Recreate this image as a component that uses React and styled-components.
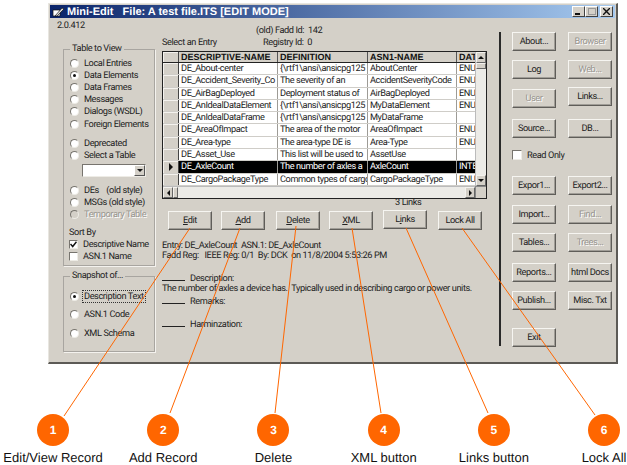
import React from 'react';
import styled, { createGlobalStyle } from 'styled-components';

const GlobalStyle = createGlobalStyle`
  html, body {
    margin: 0;
    padding: 0;
    background: #fff;
  }
  body {
    font-family: Roboto, "Liberation Sans", Arial, sans-serif;
    font-size: 9.2px;
    letter-spacing: -0.4px;
    text-rendering: geometricPrecision;
    color: #222;
  }
`;

const ORANGE = '#ff6600';

const Page = styled.div`
  position: relative;
  width: 627px;
  height: 465px;
  overflow: hidden;
  padding: 3px 9px 0 48px;
  box-sizing: border-box;
`;

const Window = styled.div`
  width: 570px;
  height: 361px;
  box-sizing: border-box;
  background: #d4d0c8;
  border-top: 1px solid #e8e6e0;
  border-left: 1px solid #e8e6e0;
  border-right: 2px solid #5c5a56;
  border-bottom: 2px solid #5c5a56;
  padding: 1px;
  display: flex;
  flex-direction: column;
`;

const TitleBar = styled.div`
  height: 13px;
  flex: none;
  display: flex;
  align-items: center;
  padding: 0 2px 0 2px;
  background: linear-gradient(90deg, #0a246a, #a6caf0);
  color: #fff;
  font-family: "Liberation Sans", Arial, sans-serif;
  font-weight: bold;
  font-size: 11px;
  letter-spacing: 0;
`;

const TitleText = styled.span`
  margin-left: 2px;
  white-space: pre;
`;

const WinButtons = styled.div`
  margin-left: auto;
  display: flex;
`;

const WinButton = styled.div`
  width: 13px;
  height: 11px;
  margin-left: ${({ $gap }) => $gap || 0}px;
  box-sizing: border-box;
  background: #d4d0c8;
  border: 1px solid;
  border-color: #fff #404040 #404040 #fff;
  display: grid;
  place-content: center;
`;

const Body = styled.div`
  flex: 1;
  display: flex;
  min-height: 0;
`;

const LeftColumn = styled.div`
  width: 112px;
  flex: none;
  padding-left: 7px;
  box-sizing: border-box;
`;

const Version = styled.div`
  height: 25px;
  padding-top: 1px;
  box-sizing: border-box;
  line-height: 13px;
`;

const Group = styled.fieldset`
  margin: 0 0 ${({ $mb }) => $mb || 0}px 6px;
  padding: 0;
  width: 92px;
  height: ${({ $h }) => $h}px;
  box-sizing: border-box;
  border: 1px solid #a8a5a0;
  box-shadow: 1px 1px 0 #f4f2ee;
  min-inline-size: 0;
`;

const Legend = styled.legend`
  margin-left: 6px;
  padding: 0 2px;
  line-height: 12px;
  margin-bottom: ${({ $mb }) => $mb || 0}px;
`;

const Option = styled.div`
  display: flex;
  align-items: center;
  height: 12.2px;
  margin-top: ${({ $mt }) => $mt || 0}px;
  padding-left: 6px;
  color: ${({ $off }) => ($off ? '#97948e' : '#222')};
  text-shadow: ${({ $off }) => ($off ? '1px 1px 0 #fff' : 'none')};
  white-space: pre;
`;

const RadioDot = styled.span`
  width: 9px;
  height: 9px;
  flex: none;
  margin-right: 5px;
  border-radius: 50%;
  box-sizing: border-box;
  border: 1px solid #77746e;
  border-right-color: #eeece6;
  border-bottom-color: #eeece6;
  background: ${({ $off }) => ($off ? '#d4d0c8' : '#fff')};
  display: grid;
  place-content: center;
  &::after {
    content: '';
    display: ${({ $on }) => ($on ? 'block' : 'none')};
    width: 3px;
    height: 3px;
    border-radius: 50%;
    background: #111;
  }
`;

const FocusLabel = styled.span`
  outline: ${({ $focus }) => ($focus ? '1px dotted #333' : 'none')};
  padding: 0 1px;
  margin-left: -1px;
`;

const Radio = ({ on, off, mt, focus, children }) => (
  <Option $off={off} $mt={mt}>
    <RadioDot $on={on} $off={off} />
    <FocusLabel $focus={focus}>{children}</FocusLabel>
  </Option>
);

const TallOption = styled.div`
  height: 18.5px;
  display: flex;
  align-items: center;
`;

const Combo = styled.div`
  width: 64px;
  height: 13px;
  margin: 2px 0 8px 18px;
  box-sizing: border-box;
  background: #fff;
  border: 1px solid #77746e;
  border-right-color: #eeece6;
  border-bottom-color: #eeece6;
  display: flex;
  justify-content: flex-end;
`;

const ComboArrow = styled.div`
  width: 11px;
  box-sizing: border-box;
  background: #d4d0c8;
  border: 1px solid;
  border-color: #fff #555 #555 #fff;
  display: grid;
  place-content: center;
`;

const Arrow = styled.span`
  width: 0;
  height: 0;
  border-style: solid;
  border-color: transparent;
  ${({ $dir, $size = 3 }) => {
    const s = `${$size}px`;
    if ($dir === 'up') return `border-width: 0 ${s} ${s}; border-bottom-color: #111;`;
    if ($dir === 'left') return `border-width: ${s} ${s} ${s} 0; border-right-color: #111;`;
    if ($dir === 'right') return `border-width: ${s} 0 ${s} ${s}; border-left-color: #111;`;
    return `border-width: ${s} ${s} 0; border-top-color: #111;`;
  }}
`;

const SortTitle = styled.div`
  margin: 6px 0 -1px 5px;
  line-height: 12px;
`;

const CheckRow = styled.div`
  display: flex;
  align-items: center;
  height: 12px;
  padding-left: 5px;
  white-space: nowrap;
`;

const CheckBox = styled.span`
  width: ${({ $size }) => $size || 9}px;
  height: ${({ $size }) => $size || 9}px;
  flex: none;
  margin-right: ${({ $mr }) => $mr || 4}px;
  box-sizing: border-box;
  background: #fff;
  border: 1px solid #77746e;
  border-right-color: #eeece6;
  border-bottom-color: #eeece6;
  display: grid;
  place-content: center;
`;

const Middle = styled.div`
  width: 337px;
  flex: none;
  padding-top: 7px;
  box-sizing: border-box;
`;

const FaddLine = styled.div`
  padding-left: ${({ $pl }) => $pl}px;
  line-height: 12px;
  white-space: pre;
`;

const SelectLine = styled.div`
  display: flex;
  line-height: 12px;
  white-space: pre;
`;

const SelectLabel = styled.span`
  width: 101px;
`;

const Grid = styled.div`
  width: 325px;
  height: 148px;
  margin-top: 2px;
  box-sizing: border-box;
  border: 1px solid #222;
  background: #d4d0c8;
  display: grid;
  grid-template-columns: 1fr 11px;
  grid-template-rows: 1fr 12px;
  overflow: hidden;
`;

const GridBody = styled.div`
  overflow: hidden;
  min-width: 0;
`;

const GridRow = styled.div`
  display: grid;
  grid-template-columns: 16px 99px 90px 89px 20px;
  height: ${({ $head }) => ($head ? 11 : 12.3)}px;
  line-height: 11px;
  background: ${({ $sel }) => ($sel ? '#000' : '#fff')};
  color: ${({ $sel }) => ($sel ? '#fff' : '#222')};
  border-bottom: 1px solid ${({ $head }) => ($head ? '#222' : '#cfcdc8')};
  box-sizing: border-box;
`;

const RowHead = styled.div`
  background: #d4d0c8;
  border-right: 1px solid #444;
  box-shadow: inset 1px 1px 0 #f4f2ee;
  display: grid;
  place-content: center;
`;

const GridCell = styled.div`
  padding-left: 2px;
  overflow: hidden;
  white-space: nowrap;
  border-right: 1px solid #9d9b96;
`;

const HeadCell = styled(GridCell)`
  background: #d4d0c8;
  border-right-color: #555;
  color: #111;
  font-family: "Liberation Sans", Arial, sans-serif;
  font-weight: bold;
  font-size: 9px;
  letter-spacing: 0;
`;

const VScroll = styled.div`
  border-left: 1px solid #bbb;
  background: #ecebe7;
  display: flex;
  flex-direction: column;
`;

const ScrollBtn = styled.div`
  flex: none;
  width: ${({ $w }) => $w || 10}px;
  height: ${({ $h }) => $h || 11}px;
  box-sizing: border-box;
  background: #d4d0c8;
  border: 1px solid;
  border-color: #f4f2ee #666 #666 #f4f2ee;
  display: grid;
  place-content: center;
`;

const Spacer = styled.div`
  flex: 1;
`;

const HScroll = styled.div`
  border-top: 1px solid #bbb;
  background: #ecebe7;
  display: flex;
`;

const Corner = styled.div`
  background: #d4d0c8;
  border-top: 1px solid #888;
  border-left: 1px solid #888;
`;

const ActionRow = styled.div`
  display: flex;
  margin: 12px 0 0 6px;
  height: 20px;
  align-items: flex-start;
`;

const Btn = styled.div`
  width: 44px;
  height: 19px;
  flex: none;
  box-sizing: border-box;
  background: #d4d0c8;
  border: 1px solid;
  border-color: #f6f5f1 #5f5d59 #5f5d59 #f6f5f1;
  box-shadow: inset -1px -1px 0 #a09d97;
  display: grid;
  place-content: center;
  white-space: nowrap;
  color: ${({ $off }) => ($off ? '#97948e' : '#222')};
  text-shadow: ${({ $off }) => ($off ? '1px 1px 0 #fff' : 'none')};
  margin-left: ${({ $ml }) => $ml || 0}px;
  margin-top: ${({ $mt }) => $mt || 0}px;
`;

const Key = styled.span`
  text-decoration: underline;
`;

const LinksWrap = styled.div`
  position: relative;
  margin-left: ${({ $ml }) => $ml}px;
  margin-top: -1px;
`;

const LinkCount = styled.div`
  position: absolute;
  top: -13px;
  left: 12px;
  line-height: 12px;
  white-space: nowrap;
`;

const Info = styled.div`
  margin-top: 10px;
  line-height: 10px;
  white-space: pre;
`;

const Section = styled.div`
  line-height: 10px;
  margin-top: ${({ $mt }) => $mt || 0}px;
  white-space: pre;
`;

const Rule = styled.span`
  display: inline-block;
  width: 23px;
  margin-right: 5px;
  border-bottom: 1px solid #222;
  height: 9px;
`;

const Divider = styled.div`
  width: 2px;
  height: 314px;
  flex: none;
  margin-top: 14px;
  background: #2a2a2a;
`;

const RightColumn = styled.div`
  padding: 14px 0 0 11px;
  display: grid;
  grid-template-columns: 44px 44px;
  column-gap: 12px;
  grid-auto-rows: min-content;
`;

const ReadOnly = styled.div`
  grid-column: 1 / 3;
  height: 18px;
  margin: 8px 0 12px;
  display: flex;
  align-items: center;
`;

const RightRow = styled.div`
  grid-column: 1 / 3;
  display: grid;
  grid-template-columns: 44px 44px;
  column-gap: 12px;
  margin-top: ${({ $mt }) => $mt || 0}px;
`;

const Leaders = styled.svg`
  position: absolute;
  left: 0;
  top: 0;
  pointer-events: none;
`;

const Callouts = styled.div`
  display: grid;
  grid-template-columns: repeat(6, 110.2px);
  margin: 50px 0 0 -50px;
  width: 662px;
`;

const Callout = styled.div`
  display: flex;
  flex-direction: column;
  align-items: center;
  font-family: "Liberation Sans", Arial, sans-serif;
  letter-spacing: 0;
`;

const Badge = styled.div`
  width: 32px;
  height: 32px;
  border-radius: 50%;
  background: ${ORANGE};
  color: #fff;
  font-weight: bold;
  font-size: 12px;
  display: grid;
  place-content: center;
`;

const CalloutLabel = styled.div`
  margin-top: 5px;
  font-size: 13px;
  line-height: 14px;
  white-space: nowrap;
  color: #111;
`;

const rows = [
  ['DE_About-center', '{\\rtf1\\ansi\\ansicpg125', 'AboutCenter', 'ENUM'],
  ['DE_Accident_Severity_Co', 'The severity of an', 'AccidentSeverityCode', 'ENUM'],
  ['DE_AirBagDeployed', 'Deployment status of', 'AirBagDeployed', 'ENUM'],
  ['DE_AnIdealDataElement', '{\\rtf1\\ansi\\ansicpg125', 'MyDataElement', 'ENUM'],
  ['DE_AnIdealDataFrame', '{\\rtf1\\ansi\\ansicpg125', 'MyDataFrame', ''],
  ['DE_AreaOfImpact', 'The area of the motor', 'AreaOfImpact', 'ENUM'],
  ['DE_Area-type', 'The area-type DE is', 'Area-Type', 'ENUM'],
  ['DE_Asset_Use', 'This list will be used to', 'AssetUse', ''],
  ['DE_AxleCount', 'The number of axles a', 'AxleCount', 'INTE', true],
  ['DE_CargoPackageType', 'Common types of cargo', 'CargoPackageType', 'ENUM'],
];

const leaders = [
  [190, 228, 64, 416],
  [240, 228, 170, 413],
  [296, 226, 275, 413],
  [352, 228, 381, 413],
  [406, 228, 488, 413],
  [462, 228, 595, 415],
];

const callouts = [
  ['1', 'Edit/View Record'],
  ['2', 'Add Record'],
  ['3', 'Delete'],
  ['4', 'XML button'],
  ['5', 'Links button'],
  ['6', 'Lock All'],
];

const App = () => (
  <Page>
    <GlobalStyle />
    <Window>
      <TitleBar>
        <svg width="13" height="12" viewBox="0 0 13 12">
          <path d="M1 4 H8 V10 H1 Z" fill="#fff" stroke="#111" strokeWidth="0.7" />
          <path d="M3 10 L10 2 L12 3 L5 10 Z" fill="#ddd" stroke="#111" strokeWidth="0.7" />
        </svg>
        <TitleText>Mini-Edit   File: A test file.ITS [EDIT MODE]</TitleText>
        <WinButtons>
          <WinButton>
            <svg width="7" height="7"><rect x="0" y="5" width="5" height="2" fill="#111" /></svg>
          </WinButton>
          <WinButton>
            <svg width="8" height="7"><rect x="0.5" y="0.5" width="7" height="6" fill="none" stroke="#999" /></svg>
          </WinButton>
          <WinButton $gap={2}>
            <svg width="7" height="7"><path d="M0 0 L7 7 M7 0 L0 7" stroke="#111" strokeWidth="1.4" /></svg>
          </WinButton>
        </WinButtons>
      </TitleBar>
      <Body>
        <LeftColumn>
          <Version>2.0.412</Version>
          <Group $h={223} $mb={4}>
            <Legend $mb={2}>Table to View</Legend>
            <Radio>Local Entries</Radio>
            <Radio on>Data Elements</Radio>
            <Radio>Data Frames</Radio>
            <Radio>Messages</Radio>
            <Radio>Dialogs (WSDL)</Radio>
            <Radio>Foreign Elements</Radio>
            <Radio mt={7}>Deprecated</Radio>
            <Radio>Select a Table</Radio>
            <Combo>
              <ComboArrow><Arrow /></ComboArrow>
            </Combo>
            <Radio mt={2}>DEs    (old style)</Radio>
            <Radio>MSGs (old style)</Radio>
            <Radio off>Temporary Table</Radio>
            <SortTitle>Sort By</SortTitle>
            <CheckRow>
              <CheckBox $mr={5}>
                <svg width="7" height="7"><path d="M0.5 3 L2.7 5.5 L6.5 0.8" fill="none" stroke="#111" strokeWidth="1.5" /></svg>
              </CheckBox>
              Descriptive Name
            </CheckRow>
            <CheckRow>
              <CheckBox $mr={5} />
              ASN.1 Name
            </CheckRow>
          </Group>
          <Group $h={82}>
            <Legend $mb={5}>Snapshot of...</Legend>
            <TallOption><Radio on focus>Description Text</Radio></TallOption>
            <TallOption><Radio>ASN.1 Code</Radio></TallOption>
            <TallOption><Radio>XML Schema</Radio></TallOption>
          </Group>
        </LeftColumn>
        <Middle>
          <FaddLine $pl={94}>(old) Fadd Id:  142</FaddLine>
          <SelectLine>
            <SelectLabel>Select an Entry</SelectLabel>Registry Id:  0
          </SelectLine>
          <Grid>
            <GridBody>
              <GridRow $head>
                <RowHead />
                <HeadCell>DESCRIPTIVE-NAME</HeadCell>
                <HeadCell>DEFINITION</HeadCell>
                <HeadCell>ASN1-NAME</HeadCell>
                <HeadCell>DAT</HeadCell>
              </GridRow>
              {rows.map(([name, def, asn, type, sel]) => (
                <GridRow key={name} $sel={sel}>
                  <RowHead>{sel && <Arrow $dir="right" $size={4} />}</RowHead>
                  <GridCell>{name}</GridCell>
                  <GridCell>{def}</GridCell>
                  <GridCell>{asn}</GridCell>
                  <GridCell>{type}</GridCell>
                </GridRow>
              ))}
            </GridBody>
            <VScroll>
              <ScrollBtn><Arrow $dir="up" /></ScrollBtn>
              <ScrollBtn $h={6} />
              <Spacer />
              <ScrollBtn><Arrow /></ScrollBtn>
            </VScroll>
            <HScroll>
              <ScrollBtn><Arrow $dir="left" /></ScrollBtn>
              <ScrollBtn $w={5} />
              <Spacer />
              <ScrollBtn><Arrow $dir="right" /></ScrollBtn>
            </HScroll>
            <Corner />
          </Grid>
          <ActionRow>
            <Btn><span><Key>E</Key>dit</span></Btn>
            <Btn $ml={9}><span><Key>A</Key>dd</span></Btn>
            <Btn $ml={11}><span><Key>D</Key>elete</span></Btn>
            <Btn $ml={9}><span><Key>X</Key>ML</span></Btn>
            <LinksWrap $ml={10}>
              <LinkCount>3 Links</LinkCount>
              <Btn><span>L<Key>i</Key>nks</span></Btn>
            </LinksWrap>
            <Btn $ml={11}>Lock All</Btn>
          </ActionRow>
          <Info>
            Entry: DE_AxleCount  ASN.1: DE_AxleCount{'\n'}
            Fadd Reg:   IEEE Reg: 0/1  By: DCK  on 11/8/2004 5:53:26 PM
          </Info>
          <Section $mt={10}><Rule />Description:</Section>
          <Section>The number of axles a device has.  Typically used in describing cargo or power units.</Section>
          <Section><Rule />Remarks:</Section>
          <Section $mt={10}><Rule />Harminzation:</Section>
        </Middle>
        <Divider />
        <RightColumn>
          <RightRow><Btn>About...</Btn><Btn $off>Browser</Btn></RightRow>
          <RightRow $mt={9}><Btn>Log</Btn><Btn $off>Web...</Btn></RightRow>
          <RightRow $mt={8}><Btn $off $mt={2}>User</Btn><Btn>Links...</Btn></RightRow>
          <RightRow $mt={11}><Btn>Source...</Btn><Btn>DB...</Btn></RightRow>
          <ReadOnly><CheckBox $size={10} $mr={5} />Read Only</ReadOnly>
          <RightRow><Btn>Expor1...</Btn><Btn>Export2...</Btn></RightRow>
          <RightRow $mt={10}><Btn>Import...</Btn><Btn $off>Find...</Btn></RightRow>
          <RightRow $mt={9}><Btn>Tables...</Btn><Btn $off>Trees...</Btn></RightRow>
          <RightRow $mt={11}><Btn>Reports...</Btn><Btn>html Docs</Btn></RightRow>
          <RightRow $mt={9}><Btn>Publish...</Btn><Btn>Misc. Txt</Btn></RightRow>
          <RightRow $mt={18}><Btn>Exit</Btn></RightRow>
        </RightColumn>
      </Body>
    </Window>
    <Callouts>
      {callouts.map(([n, label]) => (
        <Callout key={n}>
          <Badge>{n}</Badge>
          <CalloutLabel>{label}</CalloutLabel>
        </Callout>
      ))}
    </Callouts>
    <Leaders width="627" height="465">
      {leaders.map(([x1, y1, x2, y2]) => (
        <line key={x1} x1={x1} y1={y1} x2={x2} y2={y2} stroke={ORANGE} strokeWidth="1" />
      ))}
    </Leaders>
  </Page>
);

export default App;
